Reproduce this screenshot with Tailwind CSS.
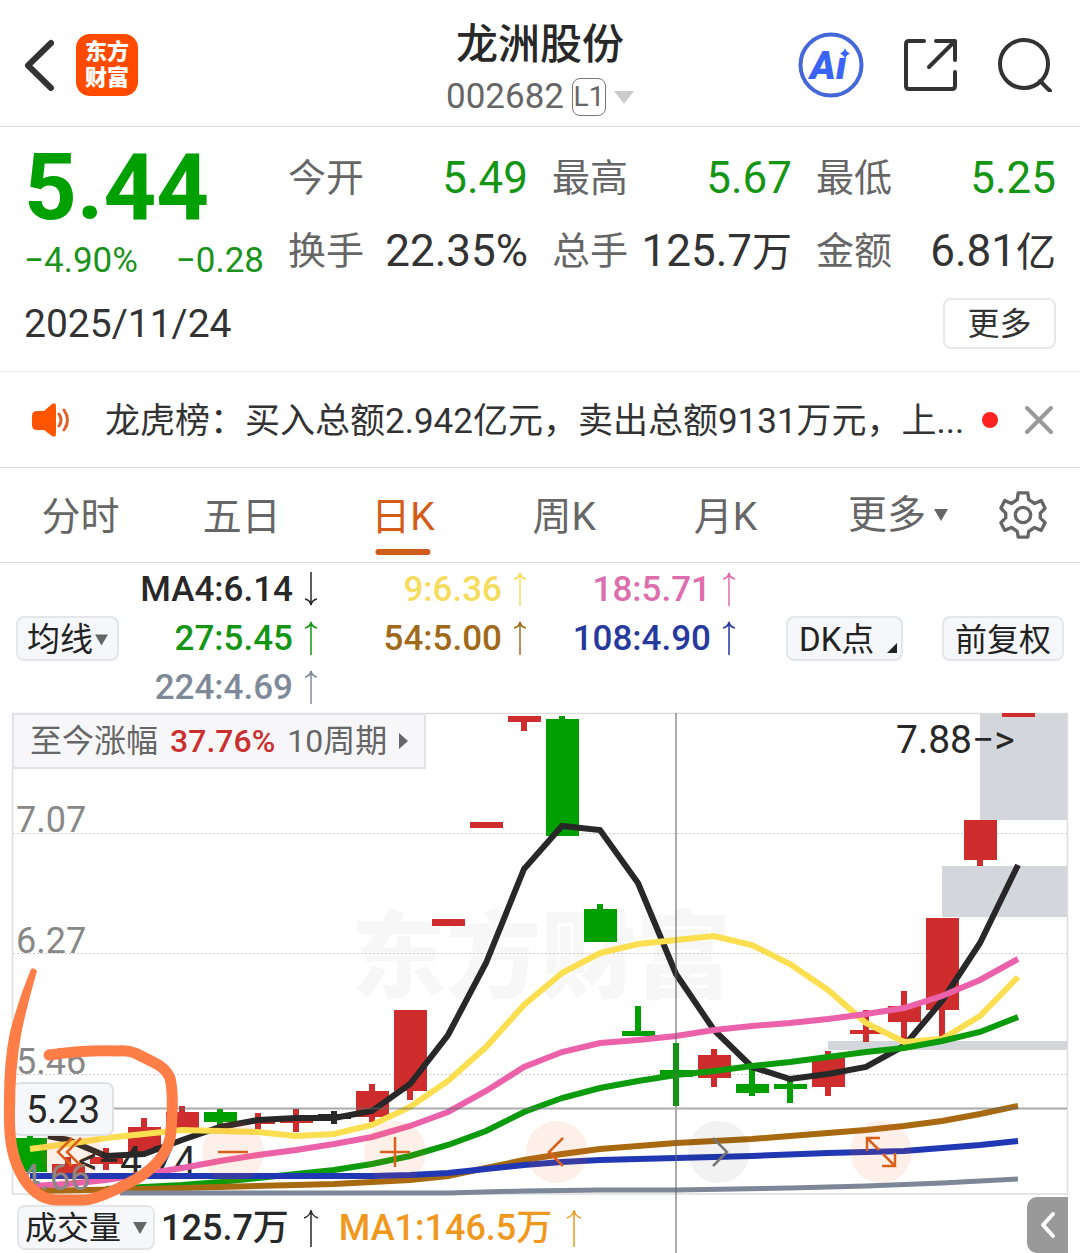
<!DOCTYPE html>
<html lang="zh-CN">

<head>
  <meta charset="UTF-8">
  <meta name="viewport" content="width=device-width, initial-scale=1">
  <title>龙洲股份 002682</title>
  <script src="https://cdn.jsdelivr.net/npm/@tailwindcss/browser@4"></script>
</head>

<body class="bg-white text-[#333] font-['Roboto','Noto_Sans_CJK_SC',sans-serif] overflow-x-hidden">

  <!-- Header -->
  <header class="grid grid-cols-[1fr_auto_1fr] items-center h-[127px] px-6 pt-1 border-b border-[#d9d9d9]">
    <div class="flex items-center gap-[22px]">
      <button aria-label="返回">
        <svg class="w-[30px] h-[52px]" viewBox="0 0 30 52" fill="none" stroke="#333" stroke-width="6" stroke-linecap="round" stroke-linejoin="round">
          <path d="M27 4 4 26.500 27 49" />
        </svg>
      </button>
      <a href="#" class="flex flex-col items-center justify-center size-[62px] rounded-[14px] bg-[#ff4a00] text-white text-[22px] leading-[26px] font-black">
        <span>东方</span>
        <span>财富</span>
      </a>
    </div>
    <div class="flex flex-col items-center pt-3">
      <h1 class="text-[42px] leading-[52px] font-medium text-[#282828]">龙洲股份</h1>
      <button class="flex items-center gap-2 text-[35px] leading-[52px] text-[#666]">
        <span>002682</span>
        <span class="flex items-center justify-center w-[34px] h-[38px] border border-[#777] rounded-[8px] text-[28px]">L1</span>
        <svg class="w-5 h-[13px]" viewBox="0 0 20 13"><path d="M0 0h20L10 13z" fill="#ccc" /></svg>
      </button>
    </div>
    <div class="flex items-center justify-end gap-10 pr-1">
      <button aria-label="AI">
        <svg class="size-[66px]" viewBox="0 0 66 66">
          <circle cx="33" cy="33" r="30.500" fill="none" stroke="#4468da" stroke-width="4" />
          <text x="12" y="47" font-family="Roboto, sans-serif" font-size="39" font-weight="900" font-style="italic" fill="#3964f7">Aı</text>
          <path d="M47 16q1 4 5 5.500-4 1.500-5 5.500-1-4-5-5.500 4-1.500 5-5.500z" fill="#3964f7" />
        </svg>
      </button>
      <button aria-label="分享">
        <svg class="w-[54px] h-[54px]" viewBox="0 0 54 54" fill="none" stroke="#333" stroke-width="4" stroke-linecap="round" stroke-linejoin="round">
          <path d="M20 3H5Q2 3 2 6v42q0 3 3 3h43q3 0 3-3V34M32 3h19v19M51 3 25 29" />
        </svg>
      </button>
      <button aria-label="搜索">
        <svg class="size-[54px]" viewBox="0 0 54 54" fill="none" stroke="#333" stroke-width="4" stroke-linecap="round">
          <circle cx="26" cy="26" r="24" />
          <path d="m42 43 10 10" />
        </svg>
      </button>
    </div>
  </header>

  <!-- Quote -->
  <section class="px-6 pt-[15px] pb-[22px] border-b border-[#ececec]">
    <div class="grid grid-cols-4 gap-x-6">
      <div class="text-[#00a000]">
        <div class="text-[92px] leading-[92px] font-bold">5.44</div>
        <div class="flex justify-between text-[35px] leading-[54px] font-[450] text-[#1c931c]">
          <span>−4.90%</span>
          <span>−0.28</span>
        </div>
      </div>
      <dl class="text-[44px] leading-[73px] font-[450]">
        <div class="flex justify-between"><dt class="text-[38px] font-normal text-[#666]">今开</dt><dd class="text-[#149614]">5.49</dd></div>
        <div class="flex justify-between"><dt class="text-[38px] font-normal text-[#666]">换手</dt><dd>22.35%</dd></div>
      </dl>
      <dl class="text-[44px] leading-[73px] font-[450]">
        <div class="flex justify-between"><dt class="text-[38px] font-normal text-[#666]">最高</dt><dd class="text-[#149614]">5.67</dd></div>
        <div class="flex justify-between"><dt class="text-[38px] font-normal text-[#666]">总手</dt><dd>125.7<span class="text-[40px] font-normal">万</span></dd></div>
      </dl>
      <dl class="text-[44px] leading-[73px] font-[450]">
        <div class="flex justify-between"><dt class="text-[38px] font-normal text-[#666]">最低</dt><dd class="text-[#149614]">5.25</dd></div>
        <div class="flex justify-between"><dt class="text-[38px] font-normal text-[#666]">金额</dt><dd>6.81<span class="text-[40px] font-normal">亿</span></dd></div>
      </dl>
    </div>
    <div class="flex items-center justify-between mt-[9px]">
      <time class="text-[39px] leading-[50px] font-[450]" datetime="2025-11-24">2025/11/24</time>
      <button class="w-[113px] h-[51px] border-2 border-[#e8e8e8] rounded-[8px] text-[32px] leading-[48px]">更多</button>
    </div>
  </section>

  <!-- Notice -->
  <section class="flex items-center h-24 pl-[31px] pr-6 border-b border-[#d9d9d9]">
    <svg class="w-[42px] h-[34px] shrink-0" viewBox="0 0 42 34">
      <path d="M6 8h7l8-7q4-2 4 2v28q0 4-4 2l-8-6H6q-5 0-5-5v-9q0-5 5-5z" fill="#ff5500" />
      <path d="M28 11q4 6 0 12M33 7q7 10 0 20" fill="none" stroke="#e0622a" stroke-width="3" stroke-linecap="round" />
    </svg>
    <p class="ml-8 flex-1 truncate pt-1 text-[35px] leading-[50px]">龙虎榜：买入总额2.942亿元，卖出总额9131万元，上...</p>
    <span class="size-4 shrink-0 rounded-full bg-[#f22]"></span>
    <button class="ml-6 w-[34px] shrink-0" aria-label="关闭">
      <svg class="size-[34px]" viewBox="0 0 34 34" stroke="#999" stroke-width="4" stroke-linecap="round"><path d="m5 5 24 24M29 5 5 29" /></svg>
    </button>
  </section>

  <!-- Period tabs -->
  <nav class="flex h-[95px] border-b border-[#d9d9d9] text-[39px] leading-[98px] text-[#666]">
    <button class="flex-1">分时</button>
    <button class="flex-1">五日</button>
    <button class="relative flex-1 text-[#d35b16]">日K<span class="absolute bottom-[7px] left-1/2 -translate-x-1/2 w-[55px] h-1.5 rounded-full bg-[#cf5c1a]"></span></button>
    <button class="flex-1">周K</button>
    <button class="flex-1">月K</button>
    <button class="flex items-center justify-center gap-2 w-[184px]">更多
      <svg class="w-[14px] h-3" viewBox="0 0 14 12"><path d="M0 0h14L7 12z" fill="#666" /></svg>
    </button>
    <button class="flex items-center justify-center w-[90px] pr-6" aria-label="设置">
      <svg class="size-12" viewBox="0 0 48 50" fill="none" stroke="#666" stroke-width="3.500" stroke-linejoin="round">
        <path d="M19 2h10l1 7 6 4 7-3 4 8-5 5v5l5 5-4 8-7-3-6 4-1 6H19l-1-6-6-4-7 3-4-8 5-5v-5l-5-5 4-8 7 3 6-4z" />
        <circle cx="24" cy="25" r="8" />
      </svg>
    </button>
  </nav>

  <!-- Moving averages -->
  <section class="flex items-center h-[150px] pl-4 pr-4">
    <button class="flex items-center justify-center gap-0.5 w-[103px] h-[45px] pt-1 border-2 border-[#e4e6ea] rounded-[8px] bg-[#f6f7fa] text-[33px] text-[#222] whitespace-nowrap">均线
      <svg class="w-[13px] h-3 shrink-0" viewBox="0 0 14 12"><path d="M0 0h14L7 12z" fill="#666" /></svg>
    </button>
    <ul class="grid grid-cols-[199px_209px_209px] text-[35px] leading-[49px] font-medium">
      <li class="flex items-center justify-end gap-[11px] text-[#282828]">MA4:6.14
        <svg class="w-[14px] h-9" viewBox="0 0 14 36" fill="none" stroke="currentColor" stroke-width="1.500"><path d="M7 1v33M1 28q5 1 6 6 1-5 6-6" /></svg>
      </li>
      <li class="flex items-center justify-end gap-[11px] text-[#f5dc5c]">9:6.36
        <svg class="w-[14px] h-9" viewBox="0 0 14 36" fill="none" stroke="currentColor" stroke-width="1.500"><path d="M7 35V2M1 8q5-1 6-6 1 5 6 6" /></svg>
      </li>
      <li class="flex items-center justify-end gap-[11px] text-[#dd6ead]">18:5.71
        <svg class="w-[14px] h-9" viewBox="0 0 14 36" fill="none" stroke="currentColor" stroke-width="1.500"><path d="M7 35V2M1 8q5-1 6-6 1 5 6 6" /></svg>
      </li>
      <li class="flex items-center justify-end gap-[11px] text-[#149614]">27:5.45
        <svg class="w-[14px] h-9" viewBox="0 0 14 36" fill="none" stroke="currentColor" stroke-width="1.500"><path d="M7 35V2M1 8q5-1 6-6 1 5 6 6" /></svg>
      </li>
      <li class="flex items-center justify-end gap-[11px] text-[#a06a1a]">54:5.00
        <svg class="w-[14px] h-9" viewBox="0 0 14 36" fill="none" stroke="currentColor" stroke-width="1.500"><path d="M7 35V2M1 8q5-1 6-6 1 5 6 6" /></svg>
      </li>
      <li class="flex items-center justify-end gap-[11px] text-[#263a9e]">108:4.90
        <svg class="w-[14px] h-9" viewBox="0 0 14 36" fill="none" stroke="currentColor" stroke-width="1.500"><path d="M7 35V2M1 8q5-1 6-6 1 5 6 6" /></svg>
      </li>
      <li class="flex items-center justify-end gap-[11px] text-[#7f8a99]">224:4.69
        <svg class="w-[14px] h-9" viewBox="0 0 14 36" fill="none" stroke="currentColor" stroke-width="1.500"><path d="M7 35V2M1 8q5-1 6-6 1 5 6 6" /></svg>
      </li>
    </ul>
    <button class="flex items-center justify-between ml-auto w-[117px] h-[45px] pt-1 pl-[11px] pr-1 border-2 border-[#e4e6ea] rounded-[8px] bg-[#f6f7fa] text-[33px] text-[#222] whitespace-nowrap">DK点
      <svg class="size-[10px] mt-4" viewBox="0 0 10 10"><path d="M10 0v10H0z" fill="#222" /></svg>
    </button>
    <button class="ml-[39px] w-[122px] h-[45px] border-2 border-[#e4e6ea] rounded-[8px] bg-[#f6f7fa] text-[32px] leading-[44px] text-[#222] whitespace-nowrap">前复权</button>
  </section>

  <!-- K-line chart -->
  <section class="relative">
    <svg class="block w-full overflow-visible" viewBox="0 713 1080 481" font-family="Roboto, 'Noto Sans CJK SC', sans-serif">
      <text x="541" y="991" text-anchor="middle" font-size="95" font-weight="900" fill="#f7f7f7">东方财富</text>
      <g fill="#d3d6db">
        <rect x="980" y="713" width="87" height="107" />
        <rect x="942" y="866" width="125" height="51" />
        <rect x="828" y="1041" width="239" height="9" />
      </g>
      <path d="M12.500 713.500h1055v480.500H12.500z" fill="none" stroke="#ddd" stroke-width="1.500" />
      <path d="M13 833.500h1054M13 953.500h1054M13 1074.500h1054" stroke="#ccc" stroke-dasharray="2 2" />
      <g id="candles"></g>
      <g font-size="39" fill="#282828">
        <text x="896" y="753">7.88−&gt;</text>
        <text x="78" y="1174">&lt;−4.74</text>
      </g>
      <g fill="none" stroke-width="6">
        <polyline stroke="#282828" points="48,1136 68,1140 106,1156 144,1154 182,1140 220,1127 258,1120 296,1118 334,1118 372,1111 410,1084 448,1035 486,963 524,869 562,826 600,830 638,883 676,974 714,1030 752,1067 790,1079 828,1074 866,1067 904,1046 942,1001 980,943 1018,865" />
        <polyline stroke="#fbdf50" points="30,1149 68,1144 106,1138 144,1134 182,1130 220,1131 258,1132 296,1136 334,1134 372,1125 410,1107 448,1081 486,1047 524,1005 562,973 600,953 638,944 676,940 714,936 752,945 790,964 828,990 866,1023 904,1042 942,1039 980,1016 1018,977" />
        <polyline stroke="#ec62aa" points="30,1186 68,1184 106,1180 144,1174 182,1168 220,1161 258,1155 296,1150 334,1144 372,1137 410,1126 448,1112 486,1091 524,1067 562,1052 600,1043 638,1040 676,1036 714,1030 752,1026 790,1023 828,1019 866,1014 904,1008 942,996 980,980 1018,959" />
        <polyline stroke="#0c9b0c" points="106,1189 144,1187 182,1185 220,1182 258,1178 296,1174 334,1170 372,1164 410,1156 448,1145 486,1131 524,1112 562,1098 600,1088 638,1081 676,1075 714,1071 752,1066 790,1062 828,1057 866,1052 904,1048 942,1041 980,1032 1018,1017" />
        <polyline stroke="#a86a10" points="30,1191 144,1189 220,1187 296,1185 334,1184 372,1182 410,1180 448,1176 486,1168 524,1160 562,1154 600,1149 638,1146 676,1143 714,1141 752,1139 790,1136 828,1133 866,1130 904,1126 942,1121 980,1114 1018,1106" />
        <polyline stroke="#2138b4" points="30,1176 372,1176 410,1175 448,1173 486,1169 524,1165 562,1162 600,1160 676,1158 752,1156 828,1153 904,1151 942,1148 980,1145 1018,1141" />
        <polyline stroke="#7d8797" stroke-width="5" points="120,1193 448,1193 524,1191 600,1190 676,1190 790,1188 866,1186 942,1183 1018,1179" />
      </g>
      <path d="M676 713v540M13 1108.500h1054" stroke="#666" stroke-opacity=".55" stroke-width="2" />
      <g font-size="36" fill="#888">
        <text x="16" y="832">7.07</text>
        <text x="16" y="953">6.27</text>
        <text x="16" y="1074">5.46</text>
        <text x="20" y="1190">4.66</text>
      </g>
    </svg>

    <button class="absolute top-0 left-3 flex items-center gap-3 h-14 px-4 border-2 border-[#e2e3e6] bg-[#f7f7fa] text-[32px] text-[#666] whitespace-nowrap">
      <span>至今涨幅</span>
      <span class="font-medium text-[#cb3030]">37.76%</span>
      <span>10周期</span>
      <svg class="w-[9px] h-4" viewBox="0 0 9 16"><path d="M0 0l9 8-9 8z" fill="#666" /></svg>
    </button>

    <!-- Chart controls -->
    <div class="absolute bottom-[11px] left-10 flex gap-[100px]">
      <button class="size-[62px] rounded-full bg-[#ff6428]/10" aria-label="快退">
        <svg viewBox="0 0 62 62" fill="none" stroke="#d9601a" stroke-width="2.500"><path d="M32 17 18 31l14 14M41 17 27 31l14 14" /></svg>
      </button>
      <button class="size-[62px] rounded-full bg-[#ff6428]/10" aria-label="缩小">
        <svg viewBox="0 0 62 62" fill="none" stroke="#d9601a" stroke-width="2.500"><path d="M16 31h30" /></svg>
      </button>
      <button class="size-[62px] rounded-full bg-[#ff6428]/10" aria-label="放大">
        <svg viewBox="0 0 62 62" fill="none" stroke="#d9601a" stroke-width="2.500"><path d="M16 31h30M31 16v30" /></svg>
      </button>
      <button class="size-[62px] rounded-full bg-[#ff6428]/10" aria-label="左移">
        <svg viewBox="0 0 62 62" fill="none" stroke="#d9601a" stroke-width="2.500"><path d="M37 17 23 31l14 14" /></svg>
      </button>
      <button class="size-[62px] rounded-full bg-black/5" aria-label="右移">
        <svg viewBox="0 0 62 62" fill="none" stroke="#777" stroke-width="2.500"><path d="m25 17 14 14-14 14" /></svg>
      </button>
      <button class="size-[62px] rounded-full bg-[#ff6428]/10" aria-label="全屏">
        <svg viewBox="0 0 62 62" fill="none" stroke="#d9601a" stroke-width="2.500"><path d="M17 30V17h13M17 17l12 12M45 32v13H32M45 45 33 33" /></svg>
      </button>
    </div>

    <span class="absolute bottom-[58px] left-3 w-[102px] h-[54px] border-2 border-[#dfe1e5] rounded-[8px] bg-[#f5f7fa] text-center text-[38px] leading-[52px] text-[#282828]">5.23</span>

    <!-- Hand-drawn mark -->
    <svg class="absolute inset-0 z-10 w-full overflow-visible pointer-events-none" viewBox="0 713 1080 481">
      <path d="M31 969q3-2 6 2-10 34-16 64-6 34-6 75L4 1100q0-40 6-68 8-32 21-63z" fill="#ff7d47" />
      <path d="M9.500 1098C9 1128 9 1150 20 1172Q34 1199 56 1200H84Q98 1200 138 1178Q170 1158 171 1130Q174 1095 170 1078Q166 1068 153 1062L135 1053Q128 1050 118 1051C90 1050 70 1052 49 1055" fill="none" stroke="#ff7d47" stroke-width="11" stroke-linecap="round" stroke-linejoin="round" />
    </svg>
  </section>

  <!-- Volume -->
  <section class="flex items-center h-[59px] pl-[17px] pr-3 text-[36px] whitespace-nowrap">
    <button class="flex items-center justify-center gap-3 w-[138px] h-[45px] mt-2 border-2 border-[#e4e6ea] rounded-[8px] bg-[#f6f7fa] text-[32px] text-[#222]">成交量
      <svg class="w-[14px] h-3 shrink-0" viewBox="0 0 14 12"><path d="M0 0h14L7 12z" fill="#666" /></svg>
    </button>
    <span class="flex items-center gap-[14px] ml-1.5 mt-2 text-[#282828] font-medium">125.7万
      <svg class="w-4 h-10" viewBox="0 0 16 40" fill="none" stroke="currentColor" stroke-width="1.500"><path d="M8 39V2M1 10q6-2 7-8 1 6 7 8" /></svg>
    </span>
    <span class="flex items-center gap-[14px] ml-5 mt-2 text-[#f0981e] font-medium">MA1:146.5万
      <svg class="w-4 h-10" viewBox="0 0 16 40" fill="none" stroke="currentColor" stroke-width="1.500"><path d="M8 39V2M1 10q6-2 7-8 1 6 7 8" /></svg>
    </span>
    <button class="flex items-center justify-center self-end ml-auto w-[41px] h-14 rounded-l-[10px] bg-[#999]" aria-label="展开">
      <svg class="w-4 h-7" viewBox="0 0 16 28" fill="none" stroke="#fff" stroke-width="4" stroke-linecap="round" stroke-linejoin="round"><path d="M13 3 3 14l10 11" /></svg>
    </button>
  </section>

  <script>
    const RED = '#cf2d2d';
    const GREEN = '#00a000';
    const BLACK = '#282828';

    // x, wick top, body top, body bottom, wick bottom, color
    const candles = [
      [30, 1135, 1138, 1172, 1172, GREEN],
      [68, 1157, 1164, 1174, 1174, RED],
      [106, 1148, 1157, 1164, 1170, RED],
      [144, 1118, 1127, 1152, 1152, RED],
      [182, 1106, 1112, 1130, 1130, RED],
      [220, 1109, 1112, 1122, 1126, GREEN],
      [258, 1113, 1120, 1124, 1130, RED],
      [296, 1109, 1119, 1123, 1132, RED],
      [334, 1111, 1114, 1119, 1124, BLACK],
      [372, 1084, 1091, 1117, 1122, RED],
      [410, 1010, 1010, 1091, 1100, RED],
      [448, 919, 919, 926, 926, RED],
      [486, 822, 822, 828, 828, RED],
      [524, 716, 716, 722, 731, RED],
      [562, 716, 719, 836, 836, GREEN],
      [600, 904, 909, 942, 942, GREEN],
      [638, 1006, 1031, 1036, 1036, GREEN],
      [676, 1043, 1070, 1077, 1106, GREEN],
      [714, 1049, 1055, 1078, 1087, RED],
      [752, 1067, 1084, 1093, 1096, GREEN],
      [790, 1080, 1084, 1089, 1103, GREEN],
      [828, 1051, 1057, 1087, 1096, RED],
      [866, 1010, 1030, 1034, 1042, RED],
      [904, 991, 1006, 1022, 1040, RED],
      [942, 918, 918, 1010, 1040, RED],
      [980, 820, 820, 860, 866, RED],
      [1018, 713, 713, 717, 717, RED]
    ];

    document.getElementById('candles').innerHTML = candles.map(([x, high, top, bottom, low, color]) =>
      `<rect x="${x - 3}" y="${high}" width="6" height="${low - high}" fill="${color}" />` +
      `<rect x="${x - 16}" y="${top}" width="33" height="${bottom - top}" fill="${color}" />`
    ).join('');
  </script>
</body>

</html>
